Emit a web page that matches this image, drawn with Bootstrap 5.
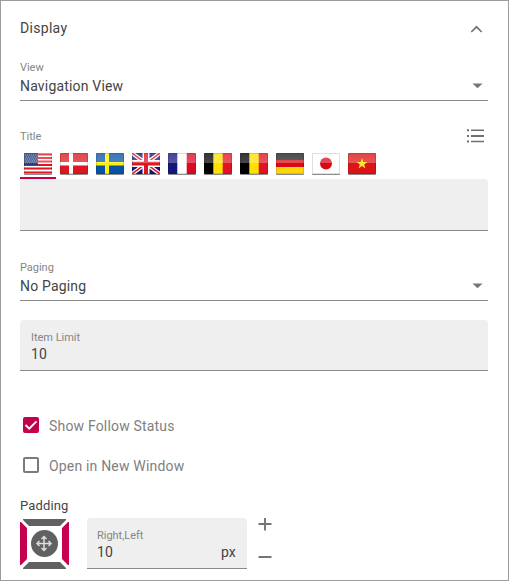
<!DOCTYPE html>
<html lang="en">
<head>
<meta charset="utf-8">
<meta name="viewport" content="width=device-width, initial-scale=1">
<title>Display settings</title>
<link href="https://cdn.jsdelivr.net/npm/bootstrap@5.3.0/dist/css/bootstrap.min.css" rel="stylesheet">
<style>
body{font-family:Roboto,"Liberation Sans",sans-serif;font-size:14px;line-height:18px;letter-spacing:.18px;color:#444;background:#fff}
.panel{width:509px;height:581px;border:1px solid #9c9c9c;padding:0 20px 0 19px;overflow:hidden}
.panel-head{height:56px;padding-right:5px}
.panel-head span{letter-spacing:.3px;padding-bottom:2px}
.field{height:44px;border-bottom:1px solid #8a8a8a}
.caption{font-size:11px;line-height:14px;letter-spacing:-.03px;color:#858585}
.field .caption{padding-top:4px}
.field .value{padding:0 5px 0 0;height:21px}
.title-row{height:17px;margin-top:26px;margin-bottom:2px;padding-right:3px}
.title-row .caption{padding-top:2px}
.flags{height:33px}
.flag-tab{width:36px;height:33px;padding:7px 0 0 4px;border-bottom:2px solid transparent}
.flag-tab.active{border-color:#c5004f}
.flag-tab svg{border-radius:1px;filter:drop-shadow(0 1px .6px rgba(0,0,0,.45))}
.filled{background:#efefef;border-bottom:1px solid #8a8a8a;border-radius:4px 4px 0 0}
.title-input{height:52px;border-radius:0 4px 0 0}
.filled-box{height:51px;padding:11px 11px 0}
.pad-row .filled-box{padding-left:10px}
.paging{margin-top:26px}
.limit{margin-top:19px}
.checks{margin-top:35px}
.check-row{height:40px;padding-left:3px;gap:10px;color:#808080}
.check-row .form-check-input{width:16px;height:16px;margin:0;border:2px solid #7b7b7b;border-radius:2px;flex:none}
.check-row .form-check-input:checked{background-color:#c5004f;border-color:#c5004f;background-image:none}
.box{position:relative;width:16px;height:38px;margin-bottom:2px}
.box svg{position:absolute;left:0;top:11px;pointer-events:none}
.pad-label{font-size:13px;letter-spacing:.15px;margin-top:11px;height:21px}
.pad-row{height:51px}
.pad-field{width:160px;margin-left:18px}
.steps{margin-left:11px;width:14px}
svg{display:block;flex:none}
</style>
</head>
<body>
<main class="panel">
  <header class="panel-head d-flex align-items-center justify-content-between">
    <span>Display</span>
    <svg width="13" height="8" viewBox="0 0 13 8"><path d="M1.3 7 6.5 1.8 11.7 7" fill="none" stroke="#757575" stroke-width="1.7"/></svg>
  </header>

  <section class="field">
    <div class="caption">View</div>
    <div class="value d-flex align-items-center justify-content-between"><span>Navigation View</span>
      <svg width="11" height="6" viewBox="0 0 11 6"><path d="M.5.5h10L5.5 5.2z" fill="#757575"/></svg></div>
  </section>

  <div class="title-row d-flex align-items-center justify-content-between">
    <span class="caption">Title</span>
    <svg width="18" height="16" viewBox="0 0 18 16"><path d="M0 1.3h2v2H0zM4 1.5h13v1.5H4zM0 7h2v2H0zM4 7h13v2H4zM0 12.5h2v2H0zM4 12.8h13v1.5H4z" fill="#707070"/></svg>
  </div>
  <svg width="0" height="0" class="position-absolute">
    <defs>
      <linearGradient id="gloss" x2="0" y2="1"><stop stop-color="#fff" stop-opacity=".2"/><stop offset="1" stop-color="#fff" stop-opacity=".28"/></linearGradient>
      <g id="shine"><path d="M0 0h28v10H0z" fill="url(#gloss)"/><path d="M.5.5h27v20H.5z" fill="none" stroke="#000" stroke-opacity=".13"/></g>
    </defs>
  </svg>
  <nav class="flags d-flex">
    <div class="flag-tab active"><svg width="28" height="21"><path fill="#fff" d="M0 0h28v21H0z"/><path d="M0 1.5h28M0 5h28M0 8.5h28M0 12h28M0 15.5h28M0 19.5h28" stroke="#dc1722" stroke-width="2"/><path fill="#203878" d="M0 0h14v12H0z"/><path d="M1 2h13M2 4h12M1 6h13M2 8h12M1 10h13" stroke="#fff" stroke-opacity=".35" stroke-dasharray="1 1"/><use href="#shine"/></svg></div>
    <div class="flag-tab"><svg width="28" height="21"><path fill="#dc1722" d="M0 0h28v21H0z"/><path fill="#fff" d="M9 0h4v21H9zM0 9h28v3.5H0z"/><use href="#shine"/></svg></div>
    <div class="flag-tab"><svg width="28" height="21"><path fill="#0754a5" d="M0 0h28v21H0z"/><path fill="#fff000" d="M9 0h4v21H9zM0 9h28v3.5H0z"/><use href="#shine"/></svg></div>
    <div class="flag-tab"><svg width="28" height="21"><path fill="#15167c" d="M0 0h28v21H0z"/><path d="m0 0 28 21M28 0 0 21" stroke="#fff" stroke-width="4"/><path d="m0 0 28 21M28 0 0 21" stroke="#dc1722" stroke-width="1.5"/><path fill="#fff" d="M10.5 0h7v21h-7zM0 7h28v7H0z"/><path fill="#dc1722" d="M12 0h4v21h-4zM0 8.8h28v3.7H0z"/><use href="#shine"/></svg></div>
    <div class="flag-tab"><svg width="28" height="21"><path fill="#fff" d="M0 0h28v21H0z"/><path fill="#15167c" d="M0 0h9.3v21H0z"/><path fill="#d80b22" d="M18.7 0H28v21h-9.3z"/><use href="#shine"/></svg></div>
    <div class="flag-tab"><svg width="28" height="21"><path fill="#ffe000" d="M0 0h28v21H0z"/><path d="M0 0h9.3v21H0z"/><path fill="#df1420" d="M18.7 0H28v21h-9.3z"/><use href="#shine"/></svg></div>
    <div class="flag-tab"><svg width="28" height="21"><path fill="#ffe000" d="M0 0h28v21H0z"/><path d="M0 0h9.3v21H0z"/><path fill="#df1420" d="M18.7 0H28v21h-9.3z"/><use href="#shine"/></svg></div>
    <div class="flag-tab"><svg width="28" height="21"><path fill="#ffd60c" d="M0 0h28v21H0z"/><path fill="#202020" d="M0 0h28v7H0z"/><path fill="#db0812" d="M0 7h28v7H0z"/><use href="#shine"/></svg></div>
    <div class="flag-tab"><svg width="28" height="21"><path fill="#fff" d="M0 0h28v21H0z"/><circle cx="14" cy="10.5" r="6" fill="#d80914"/><use href="#shine"/></svg></div>
    <div class="flag-tab"><svg width="28" height="21"><path fill="#dc1417" d="M0 0h28v21H0z"/><use href="#shine"/><path fill="#ffe52b" d="m14 5 1.35 3.9h4.2l-3.4 2.5 1.3 4-3.45-2.5-3.45 2.5 1.3-4-3.4-2.5h4.2z"/></svg></div>
  </nav>
  <div class="filled title-input"></div>

  <section class="field paging">
    <div class="caption">Paging</div>
    <div class="value d-flex align-items-center justify-content-between"><span>No Paging</span>
      <svg width="11" height="6" viewBox="0 0 11 6"><path d="M.5.5h10L5.5 5.2z" fill="#757575"/></svg></div>
  </section>

  <section class="filled filled-box limit">
    <div class="caption">Item Limit</div>
    <div>10</div>
  </section>

  <section class="checks">
    <label class="check-row d-flex align-items-center">
      <span class="box d-flex align-items-center"><input class="form-check-input" type="checkbox" checked>
      <svg width="16" height="16"><path d="m2.5 8 3.7 3.7 7.3-7.3" fill="none" stroke="#fff" stroke-width="1.9"/></svg></span>
      <span>Show Follow Status</span></label>
    <label class="check-row d-flex align-items-center">
      <span class="box d-flex align-items-center"><input class="form-check-input" type="checkbox"></span>
      <span>Open in New Window</span></label>
  </section>

  <div class="pad-label">Padding</div>
  <section class="pad-row d-flex">
    <svg width="49" height="51" viewBox="0 0 49 51">
      <path fill="#616161" d="M3 1h43v1l-6 6H9L3 2zM3 51h43v-1l-6-6H9l-6 6z"/>
      <path fill="#c5004f" d="M0 4h1l6 6v31l-6 6H0zM49 4h-1l-6 6v31l6 6h1z"/>
      <circle cx="24.5" cy="25.5" r="13.5" fill="#616161"/>
      <path d="M24 19v13M17.5 25.5h13M21.5 21l2.5-2.5 2.5 2.5M21.5 30l2.5 2.5 2.5-2.5M19.5 23L17 25.5l2.5 2.5M28.5 23l2.5 2.5-2.5 2.5" fill="none" stroke="#ddd" stroke-width="1.5"/>
    </svg>
    <div class="filled filled-box pad-field">
      <div class="caption">Right,Left</div>
      <div class="d-flex justify-content-between"><span>10</span><span>px</span></div>
    </div>
    <div class="steps d-flex flex-column">
      <svg width="14" height="51"><path d="M.5 6h13M7 0v12.5M.5 39h13" fill="none" stroke="#757575" stroke-width="1.9"/></svg>
    </div>
  </section>
</main>
<script src="https://cdn.jsdelivr.net/npm/bootstrap@5.3.0/dist/js/bootstrap.bundle.min.js"></script>
</body>
</html>
